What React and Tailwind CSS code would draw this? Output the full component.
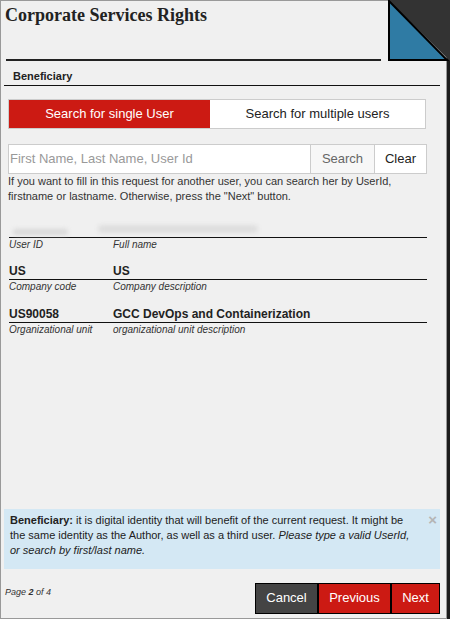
import React from "react";

const sans = { fontFamily: '"Liberation Sans", Arial, sans-serif' };

function Field({ id, name, idLabel, nameLabel, blurred, className = "" }) {
  return (
    <div className={`mx-[8px] w-[418px] ${className}`}>
      <div className="relative flex h-[16px] items-end border-b border-[#111] text-[12px] font-bold leading-[16px] text-[#222]">
        {blurred ? (
          <>
            <div className="mb-[2px] ml-[4px] h-[6px] w-[55px] rounded-full bg-[#d8d8d8] blur-[2px]" />
            <div className="mb-[4px] ml-[30px] h-[8px] w-[160px] rounded-full bg-[#dedede] blur-[2px]" />
          </>
        ) : (
          <>
            <span className="w-[104px]">{id}</span>
            <span>{name}</span>
          </>
        )}
      </div>
      <div className="flex text-[10px] italic leading-[13px] text-[#333]">
        <span className="w-[104px]">{idLabel}</span>
        <span>{nameLabel}</span>
      </div>
    </div>
  );
}

export default function App() {
  return (
    <div className="relative flex h-[619px] w-[450px] bg-[#f0f0f0]" style={sans}>
      <div className="flex h-[619px] w-[447px] flex-col border border-[#999] bg-[#f0f0f0]">
        {/* Title */}
        <div className="h-[58px] pl-[4px] pt-[3px]">
          <h1
            className="text-[18px] font-bold leading-[22px] text-[#222]"
            style={{ fontFamily: '"Liberation Serif", "Times New Roman", serif' }}
          >
            Corporate Services Rights
          </h1>
        </div>
        <div className="ml-[5px] w-[375px] border-b-2 border-[#222]" />

        {/* Section */}
        <div className="pl-[12px] pt-[9px] pb-[2px] text-[11px] font-bold leading-[13px] text-[#222]">
          Beneficiary
        </div>
        <div className="ml-[3px] w-[436px] border-b border-[#111]" />

        {/* Tabs */}
        <div className="ml-[7px] mt-[13px] flex h-[30px] w-[418px] border border-[#ccc] bg-white text-[13px] leading-[28px]">
          <div className="w-[201px] bg-[#cc1a13] text-center text-white">Search for single User</div>
          <div className="flex-1 text-center text-[#222]">Search for multiple users</div>
        </div>

        {/* Search */}
        <div className="ml-[7px] mt-[15px] flex h-[30px] w-[419px] text-[13px]">
          <div className="flex w-[303px] items-center border border-[#ccc] bg-white pl-[1px] text-[#999]">
            First Name, Last Name, User Id
          </div>
          <div className="flex w-[63px] items-center justify-center border-y border-[#ccc] bg-[#f7f7f7] text-[#666]">
            Search
          </div>
          <div className="flex flex-1 items-center justify-center border border-[#ccc] bg-white text-[#222]">
            Clear
          </div>
        </div>
        <p className="ml-[7px] w-[420px] text-[11px] leading-[15px] text-[#333]">
          If you want to fill in this request for another user, you can search her by UserId,
          firstname or lastname. Otherwise, press the "Next" button.
        </p>

        {/* Fields */}
        <Field blurred idLabel="User ID" nameLabel="Full name" className="mt-[18px]" />
        <Field id="US" name="US" idLabel="Company code" nameLabel="Company description" className="mt-[13px]" />
        <Field
          id="US90058"
          name="GCC DevOps and Containerization"
          idLabel="Organizational unit"
          nameLabel="organizational unit description"
          className="mt-[14px]"
        />

        <div className="flex-1" />

        {/* Info */}
        <div className="relative ml-[3px] h-[60px] w-[436px] bg-[#d4e8f4] pl-[6px] pr-[20px] pt-[4px] text-[11px] leading-[15px] text-[#222]">
          <p>
            <b>Beneficiary:</b> it is digital identity that will benefit of the current request. It might be
            the same identity as the Author, as well as a third user.{" "}
            <i>Please type a valid UserId, or search by first/last name.</i>
          </p>
          <span className="absolute right-[3px] top-[3px] text-[15px] font-bold leading-[15px] text-[#b5b5b5]">×</span>
        </div>

        {/* Footer */}
        <div className="mt-[14px] flex h-[30px] items-start">
          <span className="ml-[4px] mt-[3px] text-[9px] italic leading-[12px] text-[#333]">
            Page <b>2</b> of 4
          </span>
          <div className="ml-auto mr-[6px] flex text-[13px] leading-[28px] text-white">
            <div className="h-[31px] w-[63px] border border-black bg-[#444] text-center">Cancel</div>
            <div className="h-[31px] w-[73px] border border-black bg-[#cc1a13] text-center">Previous</div>
            <div className="h-[31px] w-[49px] border border-black bg-[#cc1a13] text-center">Next</div>
          </div>
        </div>
        <div className="h-[5px]" />
      </div>
      <div className="h-[619px] w-[3px] bg-[#1c1c1c]" />

      {/* corner fold */}
      <svg className="absolute right-0 top-0" width="62" height="62" viewBox="0 0 62 62">
        <polygon points="0,0 62,0 62,61" fill="#333" />
        <polygon points="1,1 1,60 59,60" fill="#2f7ba4" stroke="#000" strokeWidth="2" strokeLinejoin="miter" />
      </svg>
    </div>
  );
}
